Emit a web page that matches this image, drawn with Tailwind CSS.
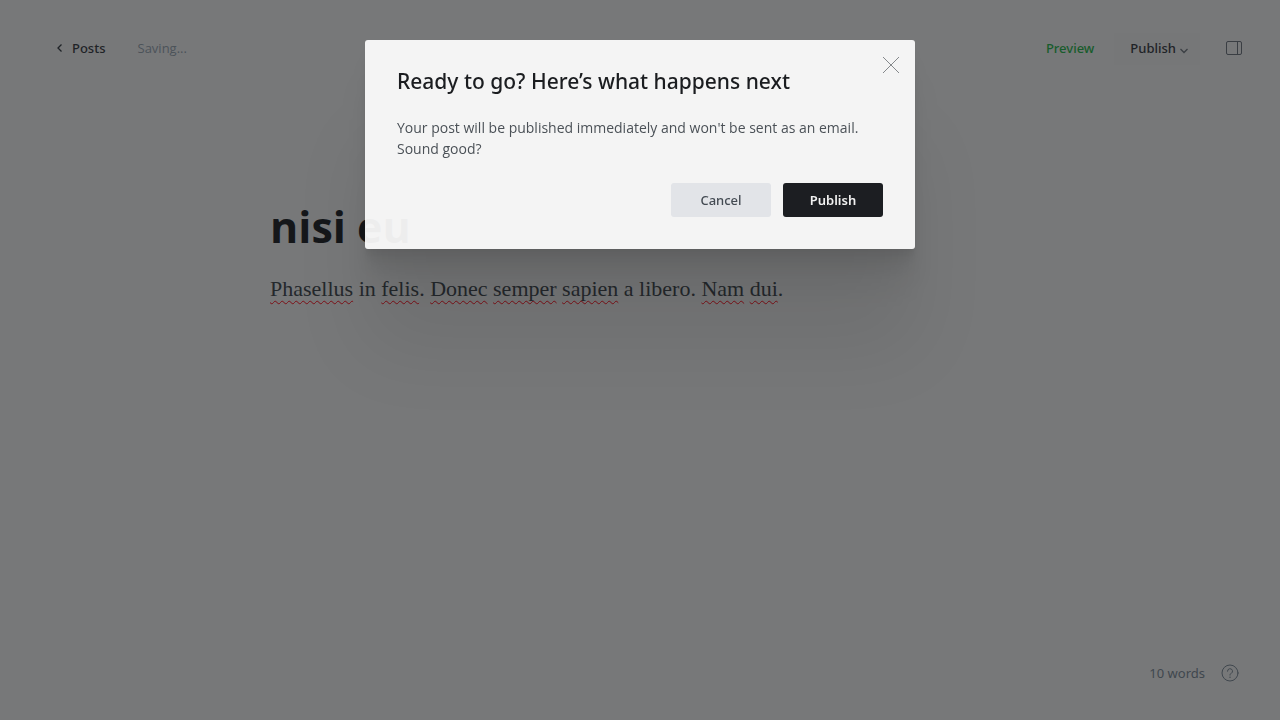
<!DOCTYPE html>
<html lang="en">
<head>
<meta charset="utf-8">
<meta name="viewport" content="width=device-width, initial-scale=1">
<title>Editor</title>
<script src="https://cdn.jsdelivr.net/npm/@tailwindcss/browser@4"></script>
</head>
<body class="flex min-h-screen flex-col bg-[#777879] font-['Segoe_UI','Noto_Sans',sans-serif] text-[13px] text-[#1f2327]">
<header class="flex items-center justify-between pt-[33px] pr-9 pl-14">
  <div class="flex items-center gap-8">
    <a href="#" class="flex items-center gap-2 font-medium">
      <svg class="-mt-0.5 h-2 w-2" viewBox="0 0 8 8" fill="none" stroke="currentColor" stroke-width="1.300" aria-hidden="true"><path d="M5.500 .5 2 4l3.500 3.500"/></svg>
      Posts</a>
    <span class="font-['Segoe_UI','Open_Sans',sans-serif] text-[#4c5359]">Saving...</span>
  </div>
  <div class="flex items-center">
    <button type="button" class="mr-5 font-medium text-[#185c2c]">Preview</button>
    <button type="button" class="flex h-8 items-center gap-1 rounded-[3px] bg-[#767778] px-4 pr-3 font-medium">Publish
      <svg class="mt-1 h-2 w-2" viewBox="0 0 8 8" fill="none" stroke="#3b3f44" stroke-width="1.300" aria-hidden="true"><path d="M.5 2 4 5.500 7.500 2"/></svg>
    </button>
    <button type="button" class="ml-6 p-0.5" aria-label="Settings">
      <svg class="-mt-0.5 h-4 w-4" viewBox="0 0 16 16" fill="none" stroke="#3a3e43" aria-hidden="true"><rect x=".5" y="1.500" width="15" height="13" rx="1.500"/><path d="M11.500 1.500v13"/></svg>
    </button>
  </div>
</header>
<main class="mx-auto w-full max-w-[740px] flex-1 pt-[130px]">
  <input type="text" aria-label="Post title" value="nisi eu" class="block h-16 w-full bg-transparent font-['Segoe_UI','Open_Sans',sans-serif] text-[43px] font-bold text-[#15171a] outline-none">
  <p class="mt-[14px] font-[Georgia,'Liberation_Serif',serif] text-[22px] leading-8 text-[#24282c] [text-decoration-skip-ink:none]"><span class="underline decoration-[#7c0f16] decoration-wavy decoration-1 underline-offset-4">Phasellus</span> in <span class="underline decoration-[#7c0f16] decoration-wavy decoration-1 underline-offset-4">felis</span>. <span class="underline decoration-[#7c0f16] decoration-wavy decoration-1 underline-offset-4">Donec</span> <span class="underline decoration-[#7c0f16] decoration-wavy decoration-1 underline-offset-4">semper</span> <span class="underline decoration-[#7c0f16] decoration-wavy decoration-1 underline-offset-4">sapien</span> a libero. <span class="underline decoration-[#7c0f16] decoration-wavy decoration-1 underline-offset-4">Nam</span> <span class="underline decoration-[#7c0f16] decoration-wavy decoration-1 underline-offset-4">dui</span>.</p>
</main>
<footer class="flex items-center justify-end gap-4 pr-[41px] pb-[37px] text-[#40474e]">
  <span>10 words</span>
  <button type="button" aria-label="Help">
    <svg class="block h-[18px] w-[18px]" viewBox="0 0 18 18" fill="none" stroke="currentColor" stroke-linecap="round" aria-hidden="true"><circle cx="9" cy="9" r="8"/><path d="M6.500 7.200a2.500 2.500 0 1 1 3.700 2.200c-.8.400-1.200.8-1.200 1.700"/><circle cx="9" cy="13.200" r=".7" fill="currentColor" stroke="none"/></svg>
  </button>
</footer>

<div class="fixed inset-0 flex items-start justify-center pt-10">
  <section role="dialog" aria-modal="true" aria-labelledby="dialog-title" class="relative w-full max-w-[550px] rounded-[3px] bg-[#fefefe]/93 p-8 shadow-[0_3px_2px_rgba(0,0,0,0.02),0_7px_5px_rgba(0,0,0,0.028),0_12px_10px_rgba(0,0,0,0.035),0_22px_18px_rgba(0,0,0,0.042),0_42px_33px_rgba(0,0,0,0.05),0_100px_80px_rgba(0,0,0,0.07)]">
    <button type="button" aria-label="Close" class="absolute top-4 right-[15px]">
      <svg class="block h-[18px] w-[18px]" viewBox="0 0 18 18" fill="none" stroke="#85888b" aria-hidden="true"><path d="m1 1 16 16M17 1 1 17"/></svg>
    </button>
    <h1 id="dialog-title" class="-mt-[5px] text-[21px] leading-7 font-medium text-[#1b1d20]">Ready to go? Here’s what happens next</h1>
    <p class="mt-[22px] font-['Segoe_UI','Open_Sans',sans-serif] text-[14px] leading-[21px] text-[#4b5157]">Your post will be published immediately and won't be sent as an email. Sound good?</p>
    <div class="mt-6 flex justify-end gap-3">
      <button type="button" class="h-[34px] w-[100px] rounded-[3px] bg-[#e2e4e8] pt-0.5 font-medium text-[#444b53]">Cancel</button>
      <button type="button" class="h-[34px] w-[100px] rounded-[3px] bg-[#1c1e22] pt-0.5 font-semibold text-[#f1f1f1]">Publish</button>
    </div>
  </section>
</div>
</body>
</html>
